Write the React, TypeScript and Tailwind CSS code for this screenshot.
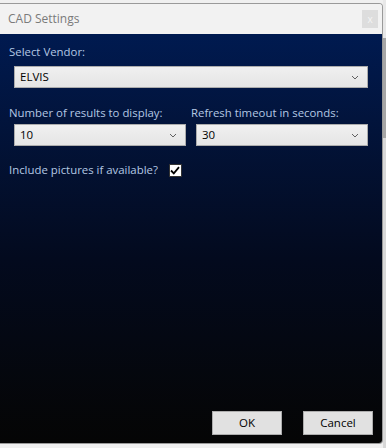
const Chevron = () => (
  <svg width="8" height="5" viewBox="0 0 8 5" className="shrink-0">
    <path d="M1 1 L4 4 L7 1" fill="none" stroke="#606060" strokeWidth="1" />
  </svg>
);

const Select = ({ value, className }: { value: string; className?: string }) => (
  <div
    className={
      "flex h-[22px] items-center justify-between border border-[#acacac] bg-gradient-to-b from-[#f0f0f0] to-[#e5e5e5] pl-[5px] pr-[8px] text-[11.5px] text-black " +
      (className ?? "")
    }
  >
    <span>{value}</span>
    <Chevron />
  </div>
);

const Button = ({ label }: { label: string }) => (
  <button className="h-[24px] w-[70px] border border-[#adadad] bg-[#e1e1e1] text-[11.5px] text-black">
    {label}
  </button>
);

const App = () => {
  return (
    <div
      className="flex h-[448px] w-[386px] bg-[#f0f0f0]"
      style={{ fontFamily: '"Open Sans", "Noto Sans", sans-serif' }}
    >
      {/* Dialog */}
      <div className="mt-[3px] flex h-[441px] w-[383px] flex-col overflow-hidden rounded-r-[4px] border border-[#9a9a9a] border-l-0">
        {/* Title bar */}
        <div className="flex h-[30px] shrink-0 items-center justify-between bg-[#f2f2f2] pl-[8px] pr-[4px]">
          <span className="text-[12px] text-[#7a7a7a]">CAD Settings</span>
          <div className="flex h-[18px] w-[16px] items-center justify-center bg-[#dddddd] text-[10px] leading-none text-[#f4f4f4]">
            x
          </div>
        </div>

        {/* Body */}
        <div className="flex flex-1 flex-col bg-gradient-to-b from-[#001a50] via-[#030a1e] via-55% to-[#050505] pl-[9px] pr-[14px] text-[11.4px] text-[#b4c8e4]">
          <div className="mt-[10px] leading-[16px]">Select Vendor:</div>
          <Select value="ELVIS" className="ml-[5px] mt-[6px]" />

          <div className="mt-[17px] flex">
            <div className="flex w-[182px] flex-col">
              <div className="leading-[16px]">Number of results to display:</div>
              <Select value="10" className="ml-[5px] mt-[3px] w-[172px]" />
            </div>
            <div className="flex flex-1 flex-col">
              <div className="leading-[16px]">Refresh timeout in seconds:</div>
              <Select value="30" className="ml-[5px] mt-[3px]" />
            </div>
          </div>

          <div className="mt-[16px] flex items-center">
            <span className="leading-[16px]">Include pictures if available?</span>
            <div className="ml-[11px] flex h-[13px] w-[13px] items-center justify-center border border-[#333] bg-white">
              <svg width="10" height="9" viewBox="0 0 10 9">
                <path d="M1 4.5 L3.8 7.3 L9 1.2" fill="none" stroke="#000" strokeWidth="1.8" />
              </svg>
            </div>
          </div>

          <div className="mt-auto mb-[8px] mr-[-5px] flex justify-end gap-[21px]">
            <Button label="OK" />
            <Button label="Cancel" />
          </div>
        </div>
      </div>

      {/* Scrollbar of the window behind */}
      <div className="flex w-[3px] flex-col">
        <div className="h-[38px] bg-[#e8e8e8]" />
        <div className="h-[100px] bg-[#a6a6a6]" />
        <div className="flex-1 bg-[#d8d8d8]" />
      </div>
    </div>
  );
};

export default App;
